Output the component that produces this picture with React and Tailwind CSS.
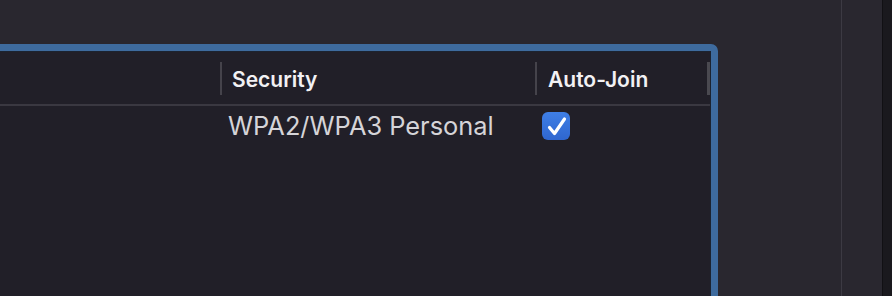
export default function App() {
  return (
    <div
      className="flex h-[296px] w-[892px] overflow-hidden bg-[#29272f]"
      style={{ fontFamily: 'Inter, "Liberation Sans", sans-serif' }}
    >
      <div className="w-[841px] shrink-0 pt-[44px]">
        <div className="-ml-[10px] h-[300px] w-[728px] rounded-[7px] border-[7px] border-[#3e6b9e] bg-[#211f28]">
          <div className="h-full border border-[#1c2330]">
            <div className="flex h-[54px] items-center border-b-2 border-[#3a3841]">
              <div className="w-[222px] shrink-0" />
              <div className="h-[33px] w-[2px] bg-[#45434b]" />
              <div className="w-[313px] shrink-0 pl-[10px] pt-[3px] text-[21px] font-semibold text-[#f2f1f4]">
                Security
              </div>
              <div className="h-[33px] w-[2px] bg-[#45434b]" />
              <div className="w-[170px] shrink-0 pl-[11px] pt-[3px] text-[21px] font-semibold text-[#f2f1f4]">
                Auto-Join
              </div>
              <div className="h-[33px] w-[3px] bg-[#4a4950]" />
            </div>
            <div className="flex h-[40px] items-center">
              <div className="w-[224px] shrink-0" />
              <div className="w-[315px] shrink-0 pl-[6px] text-[25.4px] text-[#d5d4d8]">
                WPA2/WPA3 Personal
              </div>
              <div className="pl-[5px]">
                <div className="h-[28px] w-[28px] rounded-[6px] bg-gradient-to-b from-[#3f7fe6] to-[#2f66cf]">
                  <svg width="28" height="28" viewBox="0 0 28 28" fill="none">
                    <path
                      d="M7.5 15.5 L12.5 21.5 L22.5 7"
                      stroke="white"
                      strokeWidth="3.2"
                      strokeLinecap="round"
                      strokeLinejoin="round"
                    />
                  </svg>
                </div>
              </div>
            </div>
          </div>
        </div>
      </div>
      <div className="w-px shrink-0 bg-[#3c3a43]" />
      <div className="w-[40px] shrink-0" />
      <div className="w-px shrink-0 bg-[#111014]" />
      <div className="flex-1 bg-[#1a191e]" />
    </div>
  )
}
